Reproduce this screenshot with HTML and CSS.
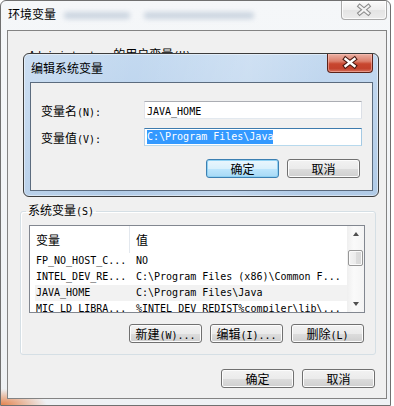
FILE: index.html
```html
<!DOCTYPE html>
<html lang="zh-CN">
<head>
<meta charset="utf-8">
<title>环境变量</title>
<link rel="stylesheet" href="styles.css">
</head>
<body>
<div class="win">
  <div class="titlebar">
    <span class="title">环境变量</span>
    <span class="ghost g1"></span>
    <span class="ghost g2"></span>
    <span class="cap-close inactive">
      <svg width="46" height="18" viewBox="0 0 46 18">
        <path d="M18.5 5 L27.5 12.5 M27.5 5 L18.5 12.5" stroke="#8c8c8c" stroke-width="4.4" stroke-linecap="square" fill="none"/>
        <path d="M18.5 5 L27.5 12.5 M27.5 5 L18.5 12.5" stroke="#f4f4f4" stroke-width="2.2" stroke-linecap="square" fill="none"/>
      </svg>
    </span>
  </div>
  <div class="client">
    <div class="user-label"><span class="m">Administrator </span>的用户变量<span class="m">(U)</span></div>
    <div class="user-area"></div>
    <fieldset class="group">
      <legend>系统变量<span class="m">(S)</span></legend>
      <div class="listview">
        <div class="lv-main">
          <div class="lv-head"><span class="h1">变量</span><span class="h2">值</span></div>
          <div class="lv-rows">
            <div class="row"><span class="c1 m">FP_NO_HOST_C...</span><span class="c2 m">NO</span></div>
            <div class="row"><span class="c1 m">INTEL_DEV_RE...</span><span class="c2 m">C:\Program Files (x86)\Common F...</span></div>
            <div class="row sel"><span class="c1 m">JAVA_HOME</span><span class="c2 m">C:\Program Files\Java</span></div>
            <div class="row"><span class="c1 m">MIC_LD_LIBRA...</span><span class="c2 m">%INTEL_DEV_REDIST%compiler\lib\...</span></div>
          </div>
        </div>
        <div class="vscroll">
          <div class="sb-btn"><span class="arr up"></span></div>
          <div class="thumb"></div>
          <div class="sb-btn bottom"><span class="arr down"></span></div>
        </div>
      </div>
      <div class="btnrow">
        <button class="btn">新建<span class="m">(W)...</span></button>
        <button class="btn">编辑<span class="m">(I)...</span></button>
        <button class="btn">删除<span class="m">(L)</span></button>
      </div>
    </fieldset>
    <div class="btnrow main">
      <button class="btn">确定</button>
      <button class="btn">取消</button>
    </div>
  </div>

  <div class="dialog">
    <div class="dlg-titlebar">
      <span class="dlg-title">编辑系统变量</span>
      <span class="cap-close active">
        <svg width="44" height="18" viewBox="0 0 44 18">
          <path d="M17.5 5 L26.5 12 M26.5 5 L17.5 12" stroke="#4a1a12" stroke-width="4.6" stroke-linecap="square" fill="none"/>
          <path d="M17.5 5 L26.5 12 M26.5 5 L17.5 12" stroke="#ffffff" stroke-width="2.4" stroke-linecap="square" fill="none"/>
        </svg>
      </span>
    </div>
    <div class="dlg-client">
      <div class="frow">
        <span class="flabel">变量名<span class="m">(N):</span></span>
        <div class="field"><span class="m">JAVA_HOME</span></div>
      </div>
      <div class="frow second">
        <span class="flabel">变量值<span class="m">(V):</span></span>
        <div class="field focus"><span class="m selected">C:\Program Files\Java</span></div>
      </div>
      <div class="btnrow dlg">
        <button class="btn default">确定</button>
        <button class="btn">取消</button>
      </div>
    </div>
  </div>
</div>
</body>
</html>
```
FILE: styles.css
```css
* { box-sizing: border-box; }
html, body { margin: 0; padding: 0; }
body {
  background: #ffffff;
  width: 394px;
  height: 406px;
  overflow: hidden;
  font-family: "Noto Sans CJK SC", "Noto Sans", sans-serif;
  font-size: 12px;
  color: #000;
}
.m {
  font-family: "DejaVu Sans Mono", "Liberation Mono", monospace;
  font-size: 10px;
}

/* outer window */
.win {
  position: relative;
  width: 391px;
  height: 406px;
  border: 1px solid #707070;
  border-radius: 6px 6px 0 0;
  background:
    radial-gradient(ellipse 46px 16px at 0 100%, rgba(226, 112, 48, 0.85), rgba(226, 112, 48, 0) 100%),
    linear-gradient(#f5f7f9, #eef1f4);
  display: flex;
  flex-direction: column;
}
.titlebar {
  height: 29px;
  display: flex;
  align-items: flex-start;
  padding-left: 7px;
}
.title {
  line-height: 14px;
  margin-top: 6px;
}
.ghost {
  height: 7px;
  margin-top: 11px;
  background: rgba(110, 135, 170, 0.3);
  filter: blur(2.5px);
  border-radius: 3px;
}
.g1 { width: 66px; margin-left: 8px; }
.g2 { width: 110px; margin-left: 14px; }

.cap-close {
  margin-left: auto;
  display: flex;
  align-items: center;
  justify-content: center;
}
.cap-close.inactive {
  width: 46px;
  height: 19px;
  margin-right: 3px;
  border: 1px solid #a9a9a9;
  border-top: none;
  border-radius: 0 0 4px 4px;
  background: linear-gradient(#fbfbfb, #eeeeee 50%, #e4e4e4 51%, #ececec);
  box-shadow: inset 0 0 0 1px rgba(255, 255, 255, 0.8);
}

.client {
  flex: 1;
  margin: 0 3px 6px 6px;
  border: 1px solid #838383;
  background: #f0f0f0;
  display: flex;
  flex-direction: column;
}
.user-label {
  margin: 16px 0 0 21px;
  line-height: 14px;
  height: 14px;
  white-space: nowrap;
}
.user-area { height: 142px; }

.group {
  margin: 0 10px 0 12px;
  border: 1px solid #d5dfe5;
  border-radius: 3px;
  padding: 6px 10px 11px 8px;
  min-width: 0;
  box-shadow: inset 1px 1px 0 #ffffff;
}
.group legend {
  padding: 0 2px;
  margin-left: -3px;
  line-height: 14px;
}

.listview {
  height: 88px;
  border: 1px solid #828790;
  background: #ffffff;
  display: flex;
}
.lv-main {
  flex: 1;
  overflow: hidden;
  min-width: 0;
}
.lv-head {
  height: 27px;
  display: flex;
  line-height: 27px;
}
.h1 {
  width: 100px;
  padding-left: 6px;
  border-right: 1px solid #e3e8ee;
}
.h2 { padding-left: 6px; }
.lv-rows { padding-left: 5px; }
.row {
  height: 16px;
  line-height: 16px;
  display: flex;
  white-space: nowrap;
}
.row.sel { background: #f2f2f2; }
.row .c1 { width: 101px; padding-left: 1px; flex: none; }

.vscroll {
  width: 17px;
  display: flex;
  flex-direction: column;
  background: linear-gradient(to right, #efefef, #fafafa 40%, #f4f4f4);
}
.sb-btn {
  height: 17px;
  display: flex;
  align-items: center;
  justify-content: center;
}
.sb-btn.bottom { margin-top: auto; }
.arr {
  width: 0;
  height: 0;
  border-left: 3.5px solid transparent;
  border-right: 3.5px solid transparent;
}
.arr.up { border-bottom: 4px solid #505050; margin-top: -2px; }
.arr.down { border-top: 4px solid #505050; }
.thumb {
  margin: 7px 1px 0 1px;
  height: 16px;
  border: 1px solid #979797;
  border-radius: 2px;
  background: linear-gradient(to right, #f3f3f3, #ebebeb 50%, #dcdcdc 51%, #d8d8d8);
  box-shadow: inset 0 0 0 1px #fafafa;
}

.btnrow {
  display: flex;
  justify-content: flex-end;
  gap: 8px;
}
.group .btnrow { margin-top: 11px; padding-right: 1px; }
.btnrow.main { margin-top: 14px; padding-right: 11px; }

.btn {
  width: 73px;
  height: 19px;
  padding: 0;
  border: 1px solid #707070;
  border-radius: 3px;
  background: linear-gradient(#f2f2f2 0, #ebebeb 50%, #dddddd 51%, #cfcfcf 100%);
  box-shadow: inset 0 0 0 1px #fcfcfc;
  font-family: "Noto Sans CJK SC", sans-serif;
  font-size: 12px;
  line-height: 17px;
  color: #000;
  text-align: center;
  white-space: nowrap;
}
.btn.default {
  border-color: #3c7fb1;
  background: linear-gradient(#eaf6fd 0, #d9f0fc 50%, #bee6fd 51%, #a7d9f5 100%);
  box-shadow: inset 0 0 0 1px #8fd1f3;
}

/* edit dialog overlay */
.dialog {
  position: absolute;
  left: 22px;
  top: 52px;
  width: 356px;
  height: 144px;
  border: 1px solid #3c3c3c;
  border-radius: 6px;
  background:
    linear-gradient(100deg, rgba(255, 255, 255, 0.15) 0, rgba(255, 255, 255, 0) 30%, rgba(255, 255, 255, 0.2) 60%, rgba(255, 255, 255, 0) 80%),
    linear-gradient(#c3d9f0, #bdd4ed 40%, #b1cbe7);
  box-shadow: inset 0 0 0 1px rgba(255, 255, 255, 0.45);
  display: flex;
  flex-direction: column;
}
.dlg-titlebar {
  height: 28px;
  display: flex;
  align-items: flex-start;
  padding-left: 7px;
}
.dlg-title { line-height: 28px; }
.cap-close.active {
  width: 46px;
  height: 19px;
  margin-right: 5px;
  border: 1px solid #5b2219;
  border-top: none;
  border-radius: 0 0 4px 4px;
  background: linear-gradient(#eab0a4, #dc7f6c 40%, #c8462f 55%, #c3412c 80%, #d4705c);
  box-shadow: inset 0 0 0 1px rgba(255, 200, 190, 0.5);
}
.dlg-client {
  flex: 1;
  margin: 0 5px 5px 6px;
  border: 1px solid #5b6b7e;
  background: #f0f0f0;
  padding: 18px 10px 0 10px;
}
.frow {
  display: flex;
  align-items: center;
  height: 18px;
}
.frow.second { margin-top: 9px; }
.flabel { width: 103px; flex: none; white-space: nowrap; }
.field {
  flex: 1;
  height: 18px;
  border: 1px solid;
  border-color: #abadb3 #dbdfe6 #e3e9ef #e2e3ea;
  background: #ffffff;
  padding-left: 2px;
  line-height: 16px;
  white-space: nowrap;
  overflow: hidden;
}
.field.focus { border-color: #3d7bad #a4c9e3 #b7d9ed #b5cfe7; }
.selected {
  background: #3399ff;
  color: #ffffff;
  display: inline-block;
  line-height: 14px;
  margin-top: 1px;
  vertical-align: top;
}
.btnrow.dlg { margin-top: 13px; padding-right: 2px; }
```
